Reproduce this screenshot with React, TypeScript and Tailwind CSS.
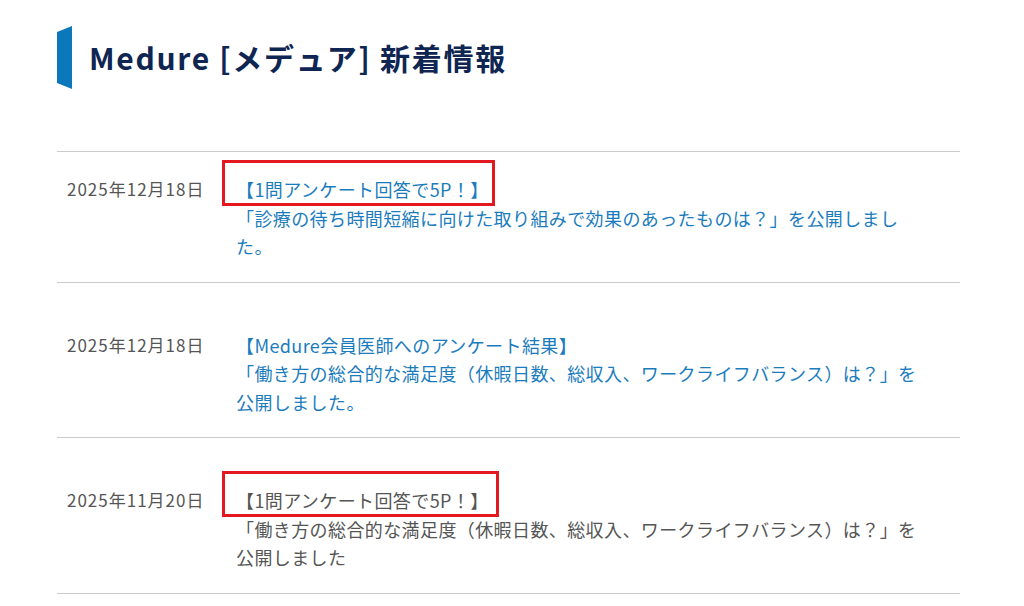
import React from 'react';

type NewsItem = {
  date: string;
  title: string;
  body: string;
  link: boolean;
  marked: boolean;
  first?: boolean;
};

const items: NewsItem[] = [
  {
    date: '2025年12月18日',
    title: '【1問アンケート回答で5P！】',
    body: '「診療の待ち時間短縮に向けた取り組みで効果のあったものは？」を公開しました。',
    link: true,
    marked: true,
    first: true,
  },
  {
    date: '2025年12月18日',
    title: '【Medure会員医師へのアンケート結果】',
    body: '「働き方の総合的な満足度（休暇日数、総収入、ワークライフバランス）は？」を公開しました。',
    link: true,
    marked: false,
  },
  {
    date: '2025年11月20日',
    title: '【1問アンケート回答で5P！】',
    body: '「働き方の総合的な満足度（休暇日数、総収入、ワークライフバランス）は？」を公開しました',
    link: false,
    marked: true,
  },
];

const font = { fontFamily: '"Noto Sans CJK JP", "Noto Sans", sans-serif' };

function HeadingBar() {
  return (
    <svg width="16" height="64" viewBox="0 0 16 64" className="shrink-0">
      <polygon points="0,6 15,0 15,63 0,57" fill="#0a78bb" />
    </svg>
  );
}

export default function App() {
  return (
    <div className="w-[1024px] h-[606px] bg-white overflow-hidden" style={font}>
      {/* ── Heading ── */}
      <div className="flex items-center gap-[16px] pl-[57px] pt-[26px]">
        <HeadingBar />
        <h1 className="text-[30px] font-bold tracking-[1.7px] text-[#0f2552] leading-none -mt-[3px]">
          Medure [メデュア] 新着情報
        </h1>
      </div>

      {/* ── News list ── */}
      <ul className="ml-[57px] w-[903px] mt-[61px] border-t border-[#cccccc]">
        {items.map((item, idx) => (
          <li
            key={idx}
            className={`flex border-b border-[#cccccc] pb-[21px] ${item.first ? 'pt-[23px]' : 'pt-[48px]'}`}
          >
            <div className="w-[179px] pl-[10px] shrink-0 text-[17px] leading-[28px] tracking-[1px] text-[#555555]">
              {item.date}
            </div>
            <div
              className={`w-[690px] text-[18px] leading-[28.5px] tracking-[0.4px] ${item.link ? 'text-[#1b7cbd]' : 'text-[#555555]'}`}
            >
              <span className="relative inline-block">
                {item.title}
                {item.marked && (
                  <span
                    className={`absolute -left-[14px] -top-[15px] -bottom-[2px] border-[3px] border-[#e3191f] ${item.first ? '-right-[6px]' : '-right-[10px]'}`}
                  />
                )}
              </span>
              <br />
              {item.body}
            </div>
          </li>
        ))}
      </ul>
    </div>
  );
}
